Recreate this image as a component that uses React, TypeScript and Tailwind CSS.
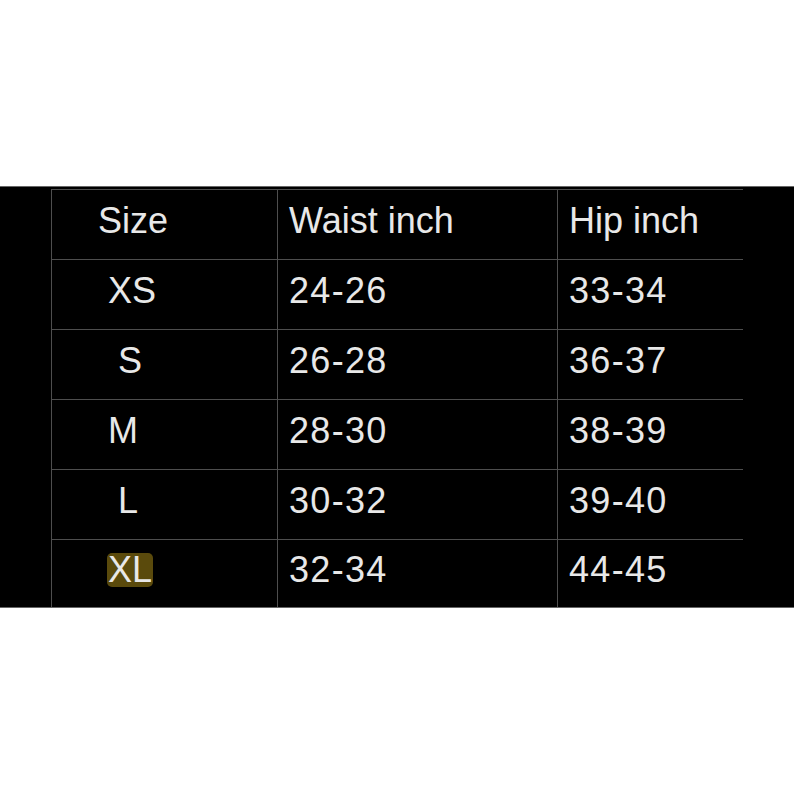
import React from "react";

const rows = [
  { size: "XS", pad: "pl-[56px]", waist: "24-26", hip: "33-34" },
  { size: "S", pad: "pl-[66px]", waist: "26-28", hip: "36-37" },
  { size: "M", pad: "pl-[56px]", waist: "28-30", hip: "38-39" },
  { size: "L", pad: "pl-[66px]", waist: "30-32", hip: "39-40" },
  { size: "XL", pad: "pl-[55px]", waist: "32-34", hip: "44-45", mark: true },
];

const cell = "flex items-center pb-[7px]";

export default function App() {
  return (
    <div
      className="h-[794px] w-[794px] bg-white text-[36px] text-[#e8e8e8]"
      style={{ fontFamily: '"Liberation Sans", Arial, sans-serif' }}
    >
      <div className="h-[186px]" />
      <div className="h-[422px] border-y border-[#666] bg-black pt-[2px]">
        <div className="ml-[51px] w-[692px] border-l border-t border-[#4e4e4e]">
          <div className="grid h-[70px] grid-cols-[226px_280px_186px] border-b border-[#4e4e4e]">
            <div className={`${cell} border-r border-[#4e4e4e] pl-[46px]`}>Size</div>
            <div className={`${cell} border-r border-[#4e4e4e] pl-[11px]`}>Waist inch</div>
            <div className={`${cell} pl-[11px]`}>Hip inch</div>
          </div>
          {rows.map((r, i) => (
            <div
              key={r.size}
              className={
                i === rows.length - 1
                  ? "grid h-[67px] grid-cols-[226px_280px_186px]"
                  : "grid h-[70px] grid-cols-[226px_280px_186px] border-b border-[#4e4e4e]"
              }
            >
              <div className={`${cell} border-r border-[#4e4e4e] ${r.pad}`}>
                {r.mark ? (
                  <span className="rounded-[5px] bg-[#5a4a0c] px-[1px] leading-[34px]">{r.size}</span>
                ) : (
                  r.size
                )}
              </div>
              <div className={`${cell} border-r border-[#4e4e4e] pl-[11px] tracking-[1.3px]`}>{r.waist}</div>
              <div className={`${cell} pl-[11px] tracking-[1.3px]`}>{r.hip}</div>
            </div>
          ))}
        </div>
      </div>
    </div>
  );
}
